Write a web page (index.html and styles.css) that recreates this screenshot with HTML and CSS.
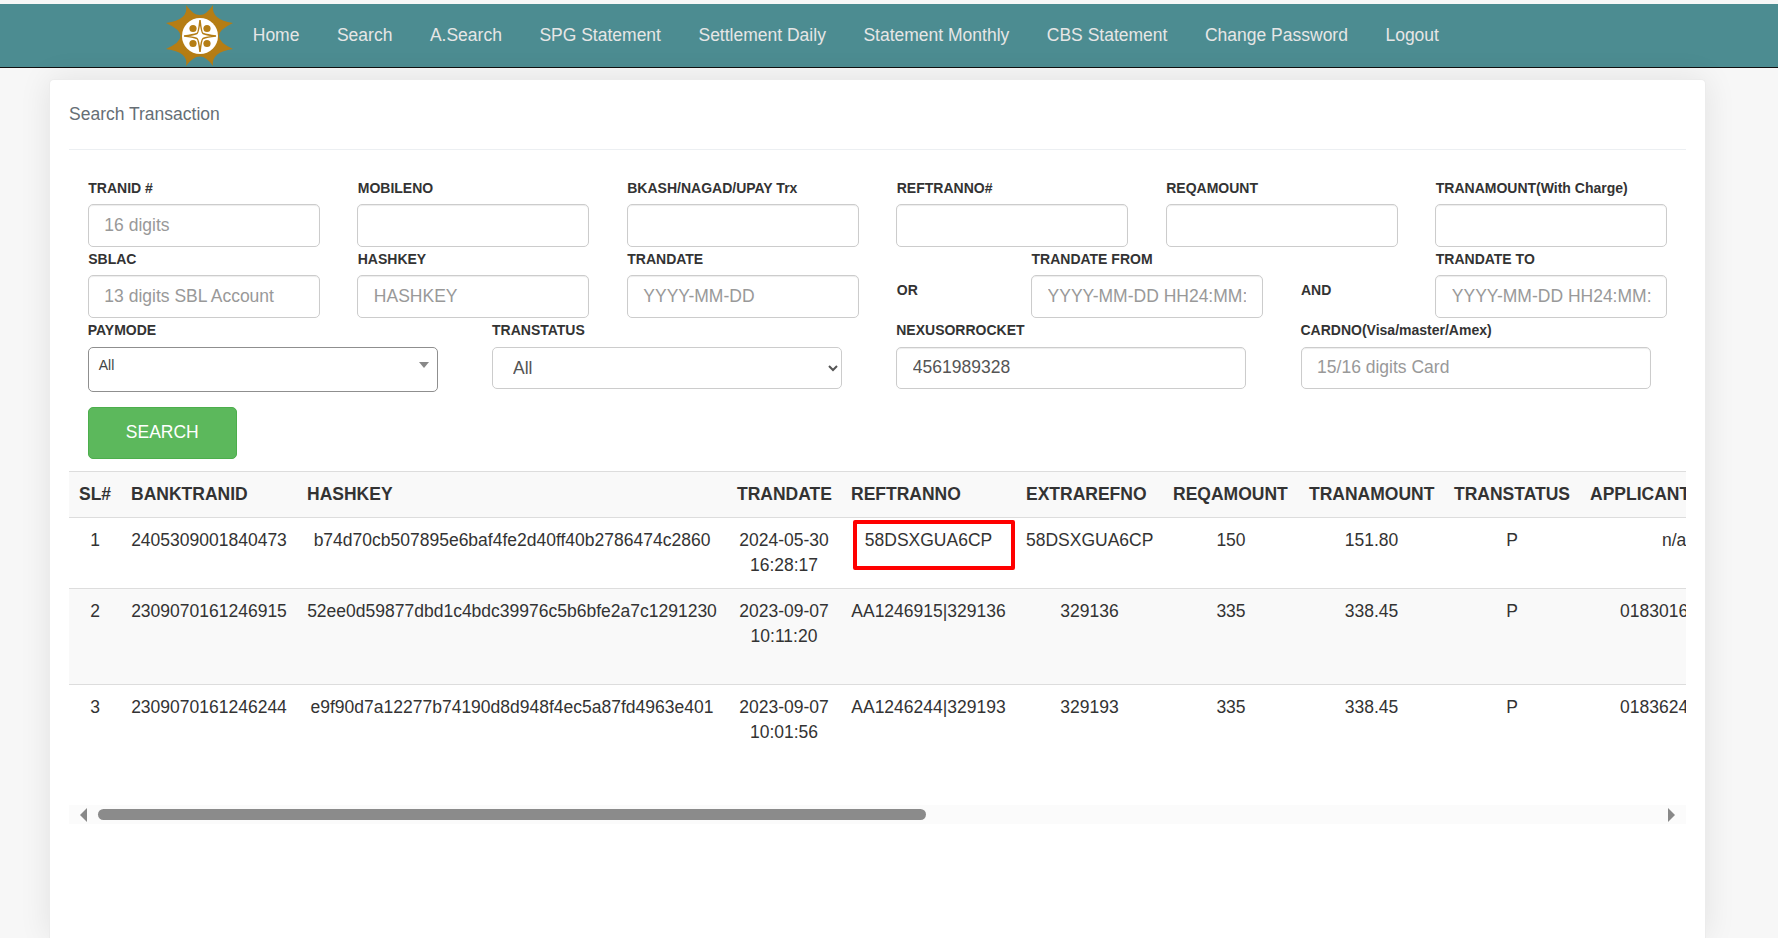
FILE: index.html
```html
<!DOCTYPE html>
<html lang="en">
<head>
<meta charset="utf-8">
<title>Search Transaction</title>
<link rel="stylesheet" href="styles.css">
</head>
<body>
<nav class="topnav">
  <svg class="logo" viewBox="0 0 68 62" aria-hidden="true">
    <path class="logo-sun" d="M20 0Q34 20 47 0Q45 15 67 18Q39 31 67 44Q45 47 47 61Q34 42 20 61Q23 47 0 44Q29 31 0 18Q23 15 20 0Z"/>
    <circle class="logo-disc" cx="34" cy="31" r="18"/>
    <path class="logo-star" d="M34 15Q35.5 28 37 28.5Q41 30 50 31Q41 32 37 33.5Q35.5 34 34 47Q32.5 34 31 33.5Q27 32 18 31Q27 30 31 28.5Q32.5 28 34 15Z"/>
    <circle class="logo-dot" cx="27" cy="23.5" r="3.6"/>
    <circle class="logo-dot" cx="41" cy="23.5" r="3.6"/>
    <circle class="logo-dot" cx="27" cy="38.5" r="3.6"/>
    <circle class="logo-dot" cx="41" cy="38.5" r="3.6"/>
  </svg>
  <a class="navlink" href="#">Home</a>
  <a class="navlink" href="#">Search</a>
  <a class="navlink" href="#">A.Search</a>
  <a class="navlink" href="#">SPG Statement</a>
  <a class="navlink" href="#">Settlement Daily</a>
  <a class="navlink" href="#">Statement Monthly</a>
  <a class="navlink" href="#">CBS Statement</a>
  <a class="navlink" href="#">Change Password</a>
  <a class="navlink" href="#">Logout</a>
</nav>

<main class="page">
  <section class="card">
    <h2 class="card-title">Search Transaction</h2>
    <form class="form-grid">
      <div class="field span2"><label class="label">TRANID #</label><input class="input" placeholder="16 digits"></div>
      <div class="field span2"><label class="label">MOBILENO</label><input class="input"></div>
      <div class="field span2"><label class="label">BKASH/NAGAD/UPAY Trx</label><input class="input"></div>
      <div class="field span2"><label class="label">REFTRANNO#</label><input class="input"></div>
      <div class="field span2"><label class="label">REQAMOUNT</label><input class="input"></div>
      <div class="field span2"><label class="label">TRANAMOUNT(With Charge)</label><input class="input"></div>

      <div class="field span2"><label class="label">SBLAC</label><input class="input" placeholder="13 digits SBL Account"></div>
      <div class="field span2"><label class="label">HASHKEY</label><input class="input" placeholder="HASHKEY"></div>
      <div class="field span2"><label class="label">TRANDATE</label><input class="input" placeholder="YYYY-MM-DD"></div>
      <div class="field span1 joiner"><label class="label">OR</label></div>
      <div class="field span2"><label class="label">TRANDATE FROM</label><input class="input" placeholder="YYYY-MM-DD HH24:MM:SS"></div>
      <div class="field span1 joiner"><label class="label">AND</label></div>
      <div class="field span2"><label class="label">TRANDATE TO</label><input class="input" placeholder="YYYY-MM-DD HH24:MM:SS"></div>

      <div class="field span3 wide"><label class="label">PAYMODE</label>
        <div class="combo"><span class="combo-text">All</span><span class="combo-arrow"></span></div>
      </div>
      <div class="field span3 wide"><label class="label">TRANSTATUS</label>
        <select class="select"><option>All</option></select>
      </div>
      <div class="field span3 wide"><label class="label">NEXUSORROCKET</label><input class="input value-input" value="4561989328"></div>
      <div class="field span3 wide"><label class="label">CARDNO(Visa/master/Amex)</label><input class="input value-input" placeholder="15/16 digits Card"></div>

      <div class="field span12 actions"><button class="btn" type="button">SEARCH</button></div>
    </form>

    <div class="table-clip">
      <table class="grid">
        <colgroup>
          <col class="c-sl"><col class="c-bank"><col class="c-hash"><col class="c-date"><col class="c-ref">
          <col class="c-extra"><col class="c-req"><col class="c-amt"><col class="c-status"><col class="c-appl">
        </colgroup>
        <thead>
          <tr>
            <th>SL#</th><th>BANKTRANID</th><th>HASHKEY</th><th>TRANDATE</th><th>REFTRANNO</th>
            <th>EXTRAREFNO</th><th>REQAMOUNT</th><th>TRANAMOUNT</th><th>TRANSTATUS</th><th>APPLICANT</th>
          </tr>
        </thead>
        <tbody>
          <tr>
            <td>1</td><td>2405309001840473</td><td>b74d70cb507895e6baf4fe2d40ff40b2786474c2860</td>
            <td>2024-05-30 16:28:17</td>
            <td class="marked">58DSXGUA6CP<span class="redbox"></span></td>
            <td>58DSXGUA6CP</td><td>150</td><td>151.80</td><td>P</td><td class="appl-na">n/a</td>
          </tr>
          <tr class="tall striped">
            <td>2</td><td>2309070161246915</td><td>52ee0d59877dbd1c4bdc39976c5b6bfe2a7c1291230</td>
            <td>2023-09-07 10:11:20</td><td>AA1246915|329136</td>
            <td>329136</td><td>335</td><td>338.45</td><td>P</td><td class="appl">0183016</td>
          </tr>
          <tr class="tall last">
            <td>3</td><td>2309070161246244</td><td>e9f90d7a12277b74190d8d948f4ec5a87fd4963e401</td>
            <td>2023-09-07 10:01:56</td><td>AA1246244|329193</td>
            <td>329193</td><td>335</td><td>338.45</td><td>P</td><td class="appl">0183624</td>
          </tr>
        </tbody>
      </table>
    </div>
    <div class="hscroll" aria-hidden="true">
      <span class="hscroll-btn"><span class="arrow-left"></span></span>
      <span class="hscroll-track"><span class="hscroll-thumb"></span></span>
      <span class="hscroll-btn"><span class="arrow-right"></span></span>
    </div>
  </section>
</main>
</body>
</html>
```

FILE: styles.css
```css
* { box-sizing: border-box; }

html, body { height: 100%; }

body {
  margin: 0;
  padding-top: 4px;
  display: flex;
  flex-direction: column;
  overflow: hidden;
  background: #f7f7f7;
  color: #333;
  font-family: "Liberation Sans", Arial, sans-serif;
  font-size: 17.5px;
  line-height: 25px;
}

.topnav {
  flex: none;
  height: 64px;
  display: flex;
  align-items: center;
  padding-left: 166px;
  background: #4c8c91;
  border-bottom: 1px solid #111;
}

.logo { width: 68px; height: 62px; flex: none; }
.logo-sun { fill: #b57d14; }
.logo-disc { fill: #fff; }
.logo-star { fill: #fff; stroke: #b57d14; stroke-width: 1.5; }
.logo-dot { fill: #b57d14; }

.navlink {
  padding: 0 18.75px;
  color: #e6e6e6;
  text-decoration: none;
  white-space: nowrap;
}

.page {
  flex: 1;
  display: flex;
  min-height: 0;
  padding: 11px 72px 0 49px;
}

.card {
  flex: 1;
  min-width: 0;
  padding: 0 19px;
  background: #fff;
  border: 1px solid #ececec;
  border-bottom: 0;
  border-radius: 5px 5px 0 0;
  box-shadow: 0 0 32px rgba(0, 0, 0, 0.09);
}

.card-title {
  margin: 0;
  height: 70px;
  display: flex;
  align-items: center;
  font-size: 17.5px;
  font-weight: 400;
  color: #666e75;
  border-bottom: 1px solid #eceff2;
}

.form-grid {
  display: grid;
  grid-template-columns: repeat(12, 1fr);
  padding-top: 28px;
}

.field {
  padding: 0 18.75px;
  height: 71px;
}

.span1 { grid-column: span 1; }
.span2 { grid-column: span 2; }
.span3 { grid-column: span 3; }
.span12 { grid-column: span 12; }

.label {
  display: block;
  height: 20px;
  line-height: 20px;
  margin-bottom: 6px;
  padding-left: 0.5px;
  font-size: 14px;
  font-weight: 700;
  color: #333;
  white-space: nowrap;
}

.joiner .label { margin-top: 31px; }

.wide { height: 72px; }
.wide .label { margin-bottom: 7px; padding-left: 0; }

.input {
  display: block;
  width: 100%;
  height: 43px;
  padding: 0 15.6px;
  font: inherit;
  color: #555;
  background: #fff;
  border: 1px solid #ccc;
  border-radius: 5px;
  box-shadow: inset 0 1px 1px rgba(0, 0, 0, 0.075);
  outline: none;
}

.input::placeholder { color: #999; opacity: 1; }

.wide .value-input { width: 350px; height: 42px; padding-bottom: 1px; }

.combo {
  width: 350px;
  height: 45px;
  padding: 4px 0 0 10px;
  display: flex;
  justify-content: space-between;
  font-size: 14px;
  line-height: 26px;
  color: #444;
  background: #fff;
  border: 1px solid #8f8f8f;
  border-radius: 5px;
}

.combo-arrow {
  width: 0;
  height: 0;
  margin: 10px 8px 0 0;
  border-style: solid;
  border-width: 6px 5px 0;
  border-color: #888 transparent transparent;
}

.select {
  display: block;
  width: 350px;
  height: 42px;
  padding: 0 17px 0 16px;
  font: inherit;
  color: #555;
  background: #fff;
  border: 1px solid #ccc;
  border-radius: 5px;
}

.actions { height: auto; padding-top: 15px; }

.btn {
  display: block;
  width: 149px;
  height: 52px;
  padding: 0 0 2px;
  font: inherit;
  color: #fff;
  background: #5cb85c;
  border: 1px solid #4cae4c;
  border-radius: 5px;
}

.table-clip {
  margin-top: 12px;
  height: 334px;
  overflow: hidden;
}

.grid {
  width: 3045px;
  table-layout: fixed;
  border-collapse: collapse;
}

.c-sl { width: 52px; }
.c-bank { width: 176px; }
.c-hash { width: 430px; }
.c-date { width: 114px; }
.c-ref { width: 175px; }
.c-extra { width: 147px; }
.c-req { width: 136px; }
.c-amt { width: 145px; }
.c-status { width: 136px; }
.c-appl { width: 1534px; }

.grid th {
  height: 46px;
  padding: 10px;
  text-align: left;
  font-weight: 700;
  white-space: nowrap;
  background: #f9f9f9;
  border-top: 1px solid #ddd;
  border-bottom: 1px solid #ddd;
}

.grid td {
  padding: 10px;
  text-align: center;
  vertical-align: top;
  border-bottom: 1px solid #ddd;
}

.grid .tall td { height: 96px; }
.grid .striped td { background: #f9f9f9; }
.grid .last td { border-bottom: 0; }

.grid .appl { text-align: left; padding-left: 40px; }
.grid .appl-na { text-align: left; padding-left: 82px; }

.marked { position: relative; }

.redbox {
  position: absolute;
  left: 12px;
  top: 2px;
  width: 162px;
  height: 50px;
  border: 4px solid #f00;
  border-radius: 2px;
}

.hscroll {
  display: flex;
  align-items: center;
  height: 19px;
  background: #fbfbfb;
}

.hscroll-btn {
  flex: none;
  width: 29px;
  display: flex;
  padding-left: 11px;
}

.hscroll-track { flex: 1; }

.hscroll-thumb {
  display: block;
  width: 828px;
  height: 11px;
  background: #8b8b8b;
  border-radius: 6px;
}

.arrow-left,
.arrow-right {
  width: 0;
  height: 0;
  border-style: solid;
  border-color: transparent;
}

.arrow-left { border-width: 7px 7px 7px 0; border-right-color: #888; }
.arrow-right { border-width: 7px 0 7px 7px; border-left-color: #888; }
```
